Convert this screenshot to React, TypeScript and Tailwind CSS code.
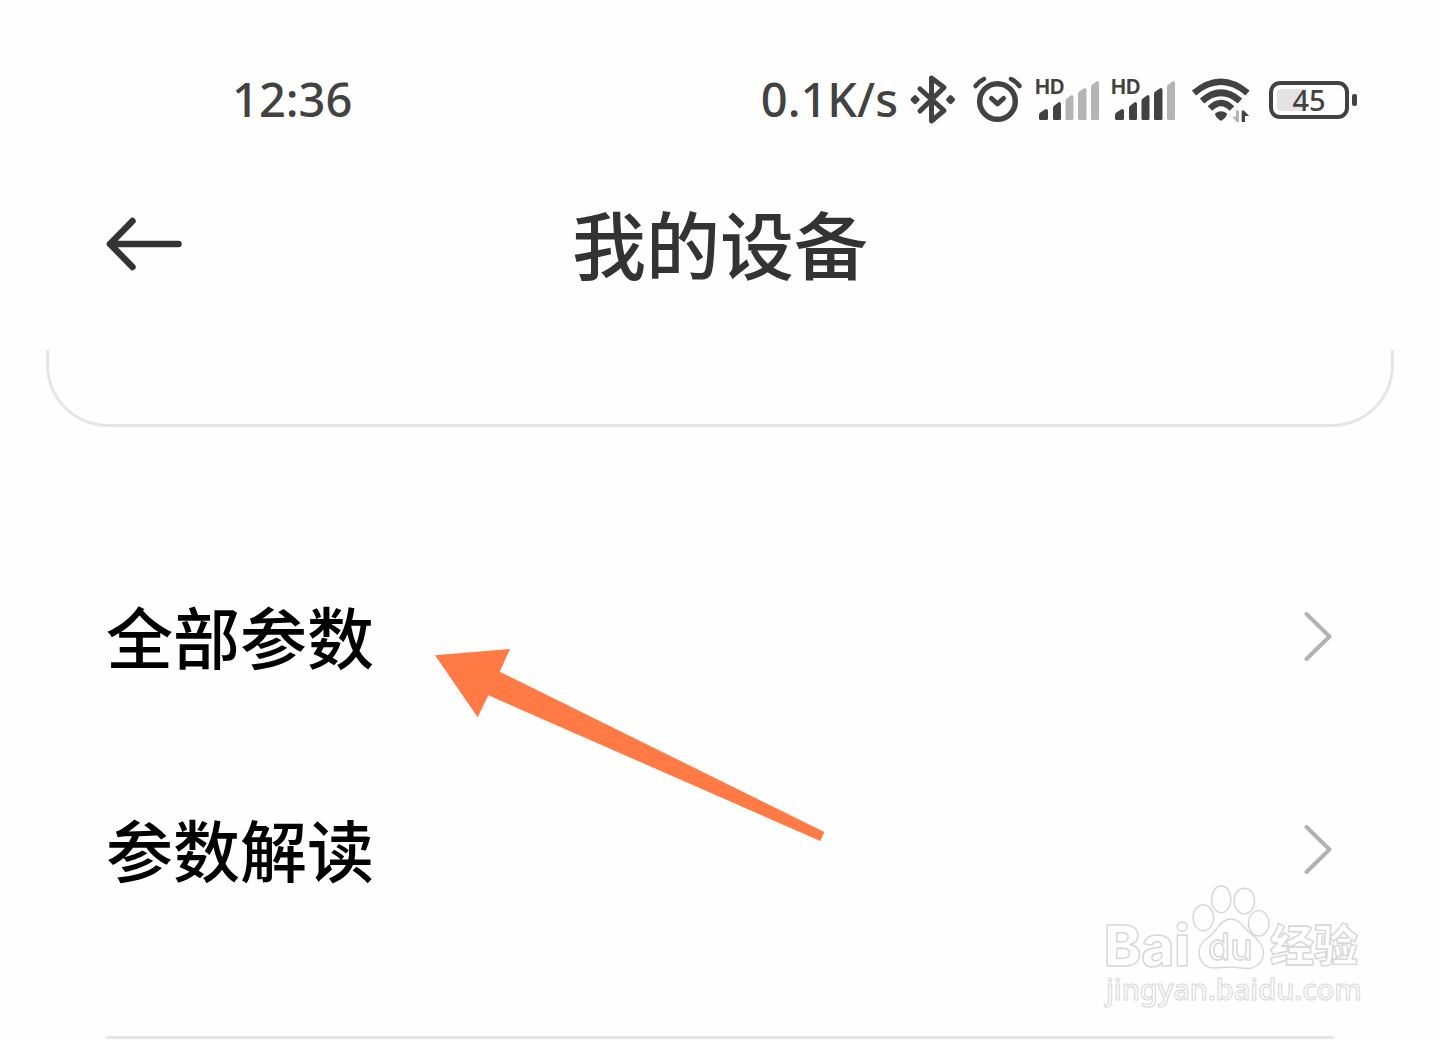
import React from "react";

const INK = "#424242";
const MUTED = "#b4b4b4";

function BluetoothIcon() {
  return (
    <svg width="50" height="50" viewBox="0 0 50 50" fill="none" aria-label="蓝牙">
      <path
        d="M10 14L34 35.5L21.5 46V3L34 12.5L10 36"
        stroke={INK}
        strokeWidth="5"
        strokeLinecap="round"
        strokeLinejoin="round"
      />
      <rect x="1.3" y="20.8" width="7.5" height="7.5" rx="2" fill={INK} transform="rotate(45 5 24.6)" />
      <rect x="36.8" y="20.8" width="7.5" height="7.5" rx="2" fill={INK} transform="rotate(45 40.5 24.6)" />
    </svg>
  );
}

function AlarmIcon() {
  return (
    <svg width="51" height="50" viewBox="0 0 51 50" fill="none" aria-label="闹钟">
      <g stroke={INK} strokeWidth="5" strokeLinecap="round" strokeLinejoin="round">
        <circle cx="25.5" cy="26.5" r="17.8" strokeWidth="5.5" />
        <path d="M19.5 23.5L25.5 28.8L31.5 23.5" />
        <path d="M3.5 11Q7 6.5 12 4" strokeWidth="4.5" />
        <path d="M39 4Q44 6.5 47.5 11" strokeWidth="4.5" />
      </g>
    </svg>
  );
}

const BARS = [
  { x: 4, top: 30, w: 9 },
  { x: 18, top: 23, w: 8 },
  { x: 30.5, top: 16, w: 8 },
  { x: 43, top: 9, w: 8.5 },
  { x: 56, top: 2, w: 8 },
];

function SignalIcon({ level }: { level: number }) {
  return (
    <svg width="64" height="58" viewBox="0 -8 64 58" aria-label="信号">
      <text x="0" y="15" fill={INK} fontSize="20" fontWeight="700" fontFamily="Inter, sans-serif">
        HD
      </text>
      {BARS.map((b, i) => (
        <path
          key={b.x}
          d={`M${b.x} ${b.top + 6}Q${b.x} ${b.top + 4} ${b.x + 2} ${b.top + 3}L${b.x + b.w - 2} ${b.top}Q${b.x + b.w} ${b.top} ${b.x + b.w} ${b.top + 2}V39.5Q${b.x + b.w} 41 ${b.x + b.w - 1.5} 41H${b.x + 1.5}Q${b.x} 41 ${b.x} 39.5Z`}
          fill={i < level ? INK : MUTED}
        />
      ))}
    </svg>
  );
}

function WifiIcon() {
  return (
    <svg width="70" height="48" viewBox="-3 0 70 48" fill="none" aria-label="无线网络">
      <g stroke={INK} strokeWidth="6.5">
        <path d="M4 17Q31 -5.5 57.5 17" />
        <path d="M12 25Q31 8.5 50 25" />
        <path d="M20 32.5Q31 21.5 42 32.5" />
      </g>
      <path d="M25 37.5Q31 33 37 37.5Q37 40.5 32.5 44Q31 45.5 29.5 44Q25 40.5 25 37.5Z" fill={INK} />
      <path d="M49 34.5V46H46.5L42.5 40.5H46V34.5Z" fill={MUTED} />
      <path d="M51.7 34.5H54L59 40H55V46H51.7Z" fill={INK} />
    </svg>
  );
}

function Battery() {
  return (
    <div className="flex items-center gap-[3px]" aria-label="电量">
      <div className="relative flex h-[38px] w-[80px] items-center justify-center rounded-[11px] border-4 border-[#424242]">
        <div className="absolute top-1 bottom-1 left-1 w-[28px] rounded-[4px] bg-[#e3e3e3]" />
        <span className="relative text-[29px] leading-[30px] font-medium text-[#424242]">45</span>
      </div>
      <div className="h-[12px] w-[5px] rounded-[2px] bg-[#424242]" />
    </div>
  );
}

function StatusBar() {
  return (
    <div className="flex h-[200px] items-center justify-between pr-[83px] pl-[232px] font-['Noto_Sans',sans-serif] text-[47px] leading-[60px] font-medium text-[#424242]">
      <span className="pb-0.5">12:36</span>
      <div className="flex items-center gap-3">
        <span className="pb-0.5">0.1K/s</span>
        <BluetoothIcon />
        <AlarmIcon />
        <SignalIcon level={2} />
        <SignalIcon level={4} />
        <WifiIcon />
        <Battery />
      </div>
    </div>
  );
}

function MenuRow({ label }: { label: string }) {
  return (
    <li>
      <button type="button" className="flex h-[213px] w-full items-center justify-between text-left">
        <span className="pb-1 text-[67px] leading-[80px] font-medium text-black">{label}</span>
        <svg width="30" height="50" viewBox="0 0 30 50" fill="none" aria-hidden="true">
          <path
            d="M2.5 2L25.5 24.5L2.5 47"
            stroke="#b2b2b2"
            strokeWidth="4"
            strokeLinecap="round"
            strokeLinejoin="round"
          />
        </svg>
      </button>
    </li>
  );
}

function PointerArrow() {
  return (
    <svg
      className="pointer-events-none absolute top-[648px] left-[434px]"
      width="392"
      height="194"
      viewBox="0 0 392 194"
      aria-hidden="true"
    >
      <path d="M1 7.3L76 1L65.7 23.7L390.3 184L386.3 193L54.3 47.3L43.7 69.3Z" fill="#ff7a45" />
    </svg>
  );
}

function Watermark() {
  return (
    <svg
      className="pointer-events-none absolute top-[870px] right-[60px]"
      width="290"
      height="150"
      viewBox="0 0 290 150"
      fill="#fefefe"
      stroke="#d6d6d6"
      strokeWidth="1.4"
      strokeLinejoin="round"
    >
      <text x="14" y="96" fontSize="56" fontWeight="800" fontFamily="Inter, sans-serif">
        Bai
      </text>
      <ellipse cx="113.3" cy="47.7" rx="10.3" ry="13" />
      <ellipse cx="131.3" cy="29.3" rx="9.7" ry="13.3" />
      <ellipse cx="154.3" cy="31" rx="10.3" ry="12.7" />
      <ellipse cx="168.7" cy="53.3" rx="10.3" ry="12.7" />
      <path d="M141 49C150 49 153 57 160 63C168 69 174 76 173.5 84C173 94 164 98.5 157 98.5C150 98.5 148 97 141 97C134 97 130 98 124 98C116 98 109 92 109 82C109 74 115 70 121 65C128 59 131 49 141 49Z" />
      <text x="118" y="90" fontSize="36" fontWeight="500" fontFamily="'Noto Sans', sans-serif">
        du
      </text>
      <text x="180" y="92" fontSize="44" fontWeight="900" fontFamily="'Noto Sans CJK SC', sans-serif">
        经验
      </text>
      <text
        x="16"
        y="130"
        fontSize="29"
        fontWeight="500"
        strokeWidth="1"
        fontFamily="'Noto Sans', sans-serif"
      >
        jingyan.baidu.com
      </text>
    </svg>
  );
}

export default function App() {
  return (
    <div className="relative min-h-screen bg-[#fefefe] font-['Noto_Sans_CJK_SC',sans-serif]">
      <StatusBar />
      <header className="grid h-[88px] grid-cols-[1fr_auto_1fr] items-center px-[106px]">
        <button type="button" aria-label="返回" className="justify-self-start">
          <svg width="76" height="56" viewBox="0 0 76 56" fill="none">
            <path
              d="M26.5 5L4 28L26.5 51M4 28H72.5"
              stroke="#333333"
              strokeWidth="6.5"
              strokeLinecap="round"
              strokeLinejoin="round"
            />
          </svg>
        </button>
        <h1 className="pb-1 text-[74px] leading-[84px] font-medium text-[#333333]">我的设备</h1>
      </header>
      <main className="pt-[62px]">
        <div className="mx-[46px] h-[77px] rounded-b-[62px] border-x-[3px] border-b-[3px] border-[#e5e5e5]" />
        <ul className="mx-[106px] mt-[103px] border-b-[3px] border-[#e5e5e5] pb-[80px]">
          <MenuRow label="全部参数" />
          <MenuRow label="参数解读" />
        </ul>
      </main>
      <PointerArrow />
      <Watermark />
    </div>
  );
}
